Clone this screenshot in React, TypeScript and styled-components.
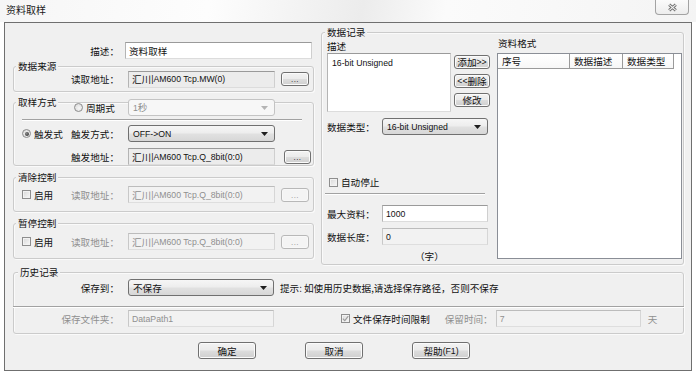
import React from "react";
import styled, { createGlobalStyle, css } from "styled-components";

const GlobalStyle = createGlobalStyle`
  html, body { margin: 0; padding: 0; background: #ffffff; }
  *, *::before, *::after { box-sizing: border-box; }
`;

const FONT = `"Noto Sans CJK SC", "Liberation Sans", sans-serif`;
const DIM = "#8f8f8f";
const FACE = "#f0f0f0";

const Dialog = styled.div`
  width: 696px;
  height: 376px;
  display: flex;
  flex-direction: column;
  overflow: hidden;
  background: #ffffff;
  font-family: ${FONT};
  font-size: 9.6px;
  line-height: 12px;
  color: #111;
`;

// latin runs in the original are a narrow ui font, smaller than the cjk text
const Latin = styled.span`
  font-family: "Liberation Sans", Arial, sans-serif;
  font-size: 8.7px;
`;

const TitleBar = styled.div`
  flex: none;
  height: 22px;
  display: flex;
  align-items: flex-start;
  background: linear-gradient(100deg, #f6f6f6 0%, #fdfdfd 30%, #ececec 52%, #fbfbfb 64%, #f4f4f4 100%);
`;

const Title = styled.span`
  padding: 4px 0 0 6px;
  font-size: 10px;
  color: #1a1a1a;
`;

const CloseButton = styled.div`
  margin-left: auto;
  margin-right: 7px;
  width: 34px;
  height: 15px;
  border: 1px solid #a3a3a3;
  border-top: none;
  border-radius: 0 0 4px 4px;
  background: linear-gradient(#fbfbfb, #ededed);
  display: flex;
  align-items: center;
  justify-content: center;
`;

const Frame = styled.div`
  flex: none;
  height: 349px;
  margin: 0 4px;
  border: 1px solid #6f6f6f;
  background: ${FACE};
  padding: 0 7px 0 8px;
  display: flex;
  flex-direction: column;
`;

const TopRow = styled.div`
  flex: none;
  height: 242px;
  display: flex;
  align-items: flex-start;
  gap: 7px;
`;

const LeftCol = styled.div`
  flex: none;
  width: 301px;
  display: flex;
  flex-direction: column;
`;

const Group = styled.div<{ $mt: number; $h: number; $w?: number }>`
  flex: none;
  margin-top: ${(p) => p.$mt}px;
  height: ${(p) => p.$h}px;
  ${(p) =>
    p.$w &&
    css`
      width: ${p.$w}px;
    `}
  border: 1px solid #cbcbcb;
  border-radius: 3px;
  box-shadow: inset 1px 1px 0 #fafafa, 1px 1px 0 #fafafa;
  display: flex;
  flex-direction: column;
`;

const Legend = styled.div<{ $ml?: number }>`
  align-self: flex-start;
  height: 12px;
  margin: -7px 0 -5px ${(p) => p.$ml ?? 2}px;
  padding: 0 2px;
  background: ${FACE};
  white-space: nowrap;
`;

const Row = styled.div<{ $mt?: number; $h?: number; $ml?: number }>`
  flex: none;
  display: flex;
  align-items: center;
  height: ${(p) => p.$h ?? 17}px;
  margin-top: ${(p) => p.$mt ?? 0}px;
  margin-left: ${(p) => p.$ml ?? 0}px;
`;

const LabelCell = styled.div<{ $w: number; $pr?: number; $left?: boolean }>`
  flex: none;
  width: ${(p) => p.$w}px;
  padding-right: ${(p) => p.$pr ?? 9}px;
  display: flex;
  align-items: center;
  justify-content: ${(p) => (p.$left ? "flex-start" : "flex-end")};
  white-space: nowrap;
`;

const Lead = styled.div<{ $ml?: number }>`
  margin-left: ${(p) => p.$ml ?? 8}px;
  margin-right: auto;
  display: flex;
  align-items: center;
  gap: 3px;
`;

const Text = styled.span<{ $dim?: boolean; $ml?: number }>`
  white-space: nowrap;
  margin-left: ${(p) => p.$ml ?? 0}px;
  color: ${(p) => (p.$dim ? DIM : "#111")};
`;

type Tone = "edit" | "readonly" | "disabled";

const Field = styled.div<{ $w: number; $tone?: Tone; $ml?: number }>`
  flex: none;
  width: ${(p) => p.$w}px;
  height: 17px;
  margin-left: ${(p) => p.$ml ?? 0}px;
  padding: 0 3px;
  display: flex;
  align-items: center;
  white-space: nowrap;
  overflow: hidden;
  border: 1px solid;
  border-color: ${(p) =>
    p.$tone === "disabled" ? "#bcbcbc #d6d6d6 #dedede #c8c8c8" : "#9a9a9a #cfcfcf #dcdcdc #b4b4b4"};
  background: ${(p) =>
    p.$tone === "readonly" ? "#ececec" : p.$tone === "disabled" ? "#f2f2f2" : "#ffffff"};
  color: ${(p) => (p.$tone === "disabled" ? DIM : "#111")};
`;

const Combo = styled.div<{ $w: number; $disabled?: boolean }>`
  flex: none;
  width: ${(p) => p.$w}px;
  height: 17px;
  padding: 0 6px 0 4px;
  display: flex;
  align-items: center;
  justify-content: space-between;
  white-space: nowrap;
  border: 1px solid ${(p) => (p.$disabled ? "#c4c4c4" : "#707070")};
  border-radius: 3px;
  background: ${(p) =>
    p.$disabled ? "#f7f7f7" : "linear-gradient(#f6f6f6, #ededed 48%, #e1e1e1 52%, #d7d7d7)"};
  color: ${(p) => (p.$disabled ? DIM : "#111")};
`;

const Button = styled.div<{ $w: number; $h?: number; $ml?: number; $disabled?: boolean }>`
  flex: none;
  width: ${(p) => p.$w}px;
  height: ${(p) => p.$h ?? 14}px;
  margin-left: ${(p) => p.$ml ?? 0}px;
  display: flex;
  align-items: center;
  justify-content: center;
  white-space: nowrap;
  border: 1px solid ${(p) => (p.$disabled ? "#b8b8b8" : "#707070")};
  border-radius: 3px;
  background: ${(p) =>
    p.$disabled ? "#f4f4f4" : "linear-gradient(#f3f3f3, #ebebeb 48%, #dddddd 52%, #cfcfcf)"};
  box-shadow: inset 0 0 0 1px ${(p) => (p.$disabled ? "#f8f8f8" : "#fbfbfb")};
  color: ${(p) => (p.$disabled ? DIM : "#111")};
`;

const Dots = styled.span`
  font-family: "Liberation Sans", Arial, sans-serif;
  font-size: 8px;
  line-height: 8px;
  padding-top: 2px;
  letter-spacing: 0.5px;
`;

const Radio = styled.span<{ $on?: boolean }>`
  flex: none;
  position: relative;
  width: 9px;
  height: 9px;
  border-radius: 50%;
  border: 1px solid #8c8c8c;
  background: radial-gradient(circle at 60% 60%, #f6f6f6, #d6d6d6);
  ${(p) =>
    p.$on &&
    css`
      &::after {
        content: "";
        position: absolute;
        inset: 1.5px;
        border-radius: 50%;
        background: radial-gradient(circle at 40% 40%, #8a8a8a, #202020);
      }
    `}
`;

const Check = styled.span<{ $ml?: number }>`
  flex: none;
  width: 9px;
  height: 9px;
  margin-left: ${(p) => p.$ml ?? 0}px;
  border: 1px solid #8e8e8e;
  background: linear-gradient(135deg, #d8d8d8, #f8f8f8);
  box-shadow: inset 0 0 0 1px #f2f2f2;
  display: flex;
  align-items: center;
  justify-content: center;
`;

const Etched = styled.div<{ $mt: number; $ml?: number; $mr?: number; $w?: number }>`
  flex: none;
  height: 2px;
  margin: ${(p) => p.$mt}px ${(p) => p.$mr ?? 0}px 0 ${(p) => p.$ml ?? 0}px;
  ${(p) =>
    p.$w &&
    css`
      width: ${p.$w}px;
    `}
  border-top: 1px solid #a2a2a2;
  border-bottom: 1px solid #ffffff;
`;

const RecBody = styled.div`
  flex: none;
  display: flex;
  padding: 0 0 0 5px;
  gap: 6px;
`;

const RecLeft = styled.div`
  flex: none;
  width: 164px;
  display: flex;
  flex-direction: column;
`;

const RecRight = styled.div`
  flex: none;
  width: 185px;
  display: flex;
  flex-direction: column;
`;

const Caption = styled.div<{ $mt: number; $ml?: number }>`
  flex: none;
  height: 12px;
  margin-top: ${(p) => p.$mt}px;
  margin-left: ${(p) => p.$ml ?? 0}px;
  white-space: nowrap;
`;

const ListRow = styled.div`
  flex: none;
  margin-top: 1px;
  display: flex;
`;

const ListBox = styled.div`
  flex: none;
  width: 124px;
  height: 59px;
  padding: 2px 4px;
  background: #ffffff;
  border: 1px solid;
  border-color: #9a9a9a #cfcfcf #dcdcdc #b4b4b4;
`;

const ButtonCol = styled.div`
  flex: none;
  margin-left: 3px;
  padding-top: 2px;
  display: flex;
  flex-direction: column;
  gap: 5px;
`;

const Table = styled.div`
  flex: none;
  margin-top: 4px;
  height: 206px;
  background: #ffffff;
  border: 1px solid #8a8e96;
`;

const HeadRow = styled.div`
  display: flex;
  height: 15px;
`;

const HeadCell = styled.div<{ $w: number }>`
  flex: none;
  width: ${(p) => p.$w}px;
  padding-left: 4px;
  display: flex;
  align-items: center;
  border-right: 1px solid #9a9a9a;
  border-bottom: 1px solid #9a9a9a;
  background: linear-gradient(#ffffff, #f7f7f7);
`;

const Unit = styled.div`
  flex: none;
  height: 12px;
  margin-top: 5px;
  padding-left: 88px;
  white-space: nowrap;
`;

const Footer = styled.div`
  flex: none;
  margin-top: 8px;
  padding-left: 185px;
  display: flex;
  gap: 49px;
`;

const Arrow = ({ dim }: { dim?: boolean }) => (
  <svg width="7" height="4" viewBox="0 0 7 4">
    <path d="M0 0H7L3.5 4Z" fill={dim ? "#b4b4b4" : "#1e1e1e"} />
  </svg>
);

const Tick = () => (
  <svg width="7" height="7" viewBox="0 0 7 7">
    <path d="M0.8 3.6L2.8 5.6L6.3 1.2" fill="none" stroke="#9c9c9c" strokeWidth="1.2" />
  </svg>
);

const CloseGlyph = () => (
  <svg width="11" height="9" viewBox="0 0 11 9">
    <path d="M2.2 1.6L8.8 7.4M8.8 1.6L2.2 7.4" stroke="#6e6e6e" strokeWidth="3" />
    <path d="M2.2 1.6L8.8 7.4M8.8 1.6L2.2 7.4" stroke="#f4f4f4" strokeWidth="1.1" />
  </svg>
);

const Addr = ({ tail }: { tail: string }) => (
  <>
    汇川<Latin>|AM600 {tail}</Latin>
  </>
);

export default function App() {
  return (
    <>
      <GlobalStyle />
      <Dialog>
        <TitleBar>
          <Title>资料取样</Title>
          <CloseButton>
            <CloseGlyph />
          </CloseButton>
        </TitleBar>
        <Frame>
          <TopRow>
            <LeftCol>
              <Row $mt={19}>
                <LabelCell $w={112} $pr={6}>
                  描述：
                </LabelCell>
                <Field $w={187}>资料取样</Field>
              </Row>

              <Group $mt={7} $h={26}>
                <Legend>数据来源</Legend>
                <Row $mt={3} $h={18}>
                  <LabelCell $w={114}>读取地址：</LabelCell>
                  <Field $w={147} $tone="readonly">
                    <Addr tail="Tcp.MW(0)" />
                  </Field>
                  <Button $w={28} $ml={6}>
                    <Dots>...</Dots>
                  </Button>
                </Row>
              </Group>

              <Group $mt={10} $h={64}>
                <Legend>取样方式</Legend>
                <Row $mt={-4}>
                  <LabelCell $w={114} $pr={12}>
                    <Lead $ml={60}>
                      <Radio />
                      <Text>周期式</Text>
                    </Lead>
                  </LabelCell>
                  <Combo $w={147} $disabled>
                    <span>
                      <Latin>1</Latin>秒
                    </span>
                    <Arrow dim />
                  </Combo>
                </Row>
                <Etched $mt={3} $ml={8} $w={280} />
                <Row $mt={4}>
                  <LabelCell $w={114}>
                    <Lead>
                      <Radio $on />
                      <Text>触发式</Text>
                    </Lead>
                    <Text>触发方式：</Text>
                  </LabelCell>
                  <Combo $w={147}>
                    <Latin>OFF-&gt;ON</Latin>
                    <Arrow />
                  </Combo>
                </Row>
                <Row $mt={6}>
                  <LabelCell $w={114}>触发地址：</LabelCell>
                  <Field $w={147} $tone="readonly">
                    <Addr tail="Tcp.Q_8bit(0:0)" />
                  </Field>
                  <Button $w={27} $ml={9}>
                    <Dots>...</Dots>
                  </Button>
                </Row>
              </Group>

              <Group $mt={11} $h={35}>
                <Legend>清除控制</Legend>
                <Row $mt={8}>
                  <LabelCell $w={114}>
                    <Lead>
                      <Check />
                      <Text>启用</Text>
                    </Lead>
                    <Text $dim>读取地址：</Text>
                  </LabelCell>
                  <Field $w={147} $tone="disabled">
                    <Addr tail="Tcp.Q_8bit(0:0)" />
                  </Field>
                  <Button $w={28} $ml={6} $disabled>
                    <Dots>...</Dots>
                  </Button>
                </Row>
              </Group>

              <Group $mt={11} $h={36}>
                <Legend>暂停控制</Legend>
                <Row $mt={9}>
                  <LabelCell $w={114}>
                    <Lead>
                      <Check />
                      <Text>启用</Text>
                    </Lead>
                    <Text $dim>读取地址：</Text>
                  </LabelCell>
                  <Field $w={147} $tone="disabled">
                    <Addr tail="Tcp.Q_8bit(0:0)" />
                  </Field>
                  <Button $w={28} $ml={6} $disabled>
                    <Dots>...</Dots>
                  </Button>
                </Row>
              </Group>
            </LeftCol>

            <Group $mt={9} $h={233} $w={363}>
              <Legend $ml={3}>数据记录</Legend>
              <RecBody>
                <RecLeft>
                  <Caption $mt={7}>描述</Caption>
                  <ListRow>
                    <ListBox>
                      <Latin>16-bit Unsigned</Latin>
                    </ListBox>
                    <ButtonCol>
                      <Button $w={36}>
                        添加<Latin>&gt;&gt;</Latin>
                      </Button>
                      <Button $w={36}>
                        <Latin>&lt;&lt;</Latin>删除
                      </Button>
                      <Button $w={36}>修改</Button>
                    </ButtonCol>
                  </ListRow>
                  <Row $mt={6}>
                    <LabelCell $w={55} $pr={0} $left>
                      数据类型：
                    </LabelCell>
                    <Combo $w={106}>
                      <Latin>16-bit Unsigned</Latin>
                      <Arrow />
                    </Combo>
                  </Row>
                  <Row $mt={41} $h={12} $ml={2}>
                    <Check />
                    <Text $ml={3}>自动停止</Text>
                  </Row>
                  <Etched $mt={5} $ml={-2} $w={160} />
                  <Row $mt={10}>
                    <LabelCell $w={55} $pr={0} $left>
                      最大资料：
                    </LabelCell>
                    <Field $w={106}>
                      <Latin>1000</Latin>
                    </Field>
                  </Row>
                  <Row $mt={6}>
                    <LabelCell $w={55} $pr={0} $left>
                      数据长度：
                    </LabelCell>
                    <Field $w={106} $tone="disabled">
                      <Text>
                        <Latin>0</Latin>
                      </Text>
                    </Field>
                  </Row>
                  <Unit>（字）</Unit>
                </RecLeft>
                <RecRight>
                  <Caption $mt={4} $ml={1}>
                    资料格式
                  </Caption>
                  <Table>
                    <HeadRow>
                      <HeadCell $w={72}>序号</HeadCell>
                      <HeadCell $w={53}>数据描述</HeadCell>
                      <HeadCell $w={51}>数据类型</HeadCell>
                    </HeadRow>
                  </Table>
                </RecRight>
              </RecBody>
            </Group>
          </TopRow>

          <Group $mt={7} $h={62}>
            <Legend $ml={4}>历史记录</Legend>
            <Row $mt={6}>
              <LabelCell $w={114}>保存到：</LabelCell>
              <Combo $w={146}>
                <span>不保存</span>
                <Arrow />
              </Combo>
              <Text $ml={6}>提示: 如使用历史数据,请选择保存路径，否则不保存</Text>
            </Row>
            <Etched $mt={10} $ml={-1} $mr={-1} />
            <Row $mt={2}>
              <LabelCell $w={114}>
                <Text $dim>保存文件夹：</Text>
              </LabelCell>
              <Field $w={146} $tone="disabled">
                <Latin>DataPath1</Latin>
              </Field>
              <Check $ml={67}>
                <Tick />
              </Check>
              <Text $ml={3}>文件保存时间限制</Text>
              <Text $dim $ml={15}>
                保留时间：
              </Text>
              <Field $w={145} $tone="disabled" $ml={3}>
                <Latin>7</Latin>
              </Field>
              <Text $dim $ml={7}>
                天
              </Text>
            </Row>
          </Group>

          <Footer>
            <Button $w={58} $h={17}>
              确定
            </Button>
            <Button $w={58} $h={17}>
              取消
            </Button>
            <Button $w={58} $h={17}>
              帮助<Latin>(F1)</Latin>
            </Button>
          </Footer>
        </Frame>
      </Dialog>
    </>
  );
}
